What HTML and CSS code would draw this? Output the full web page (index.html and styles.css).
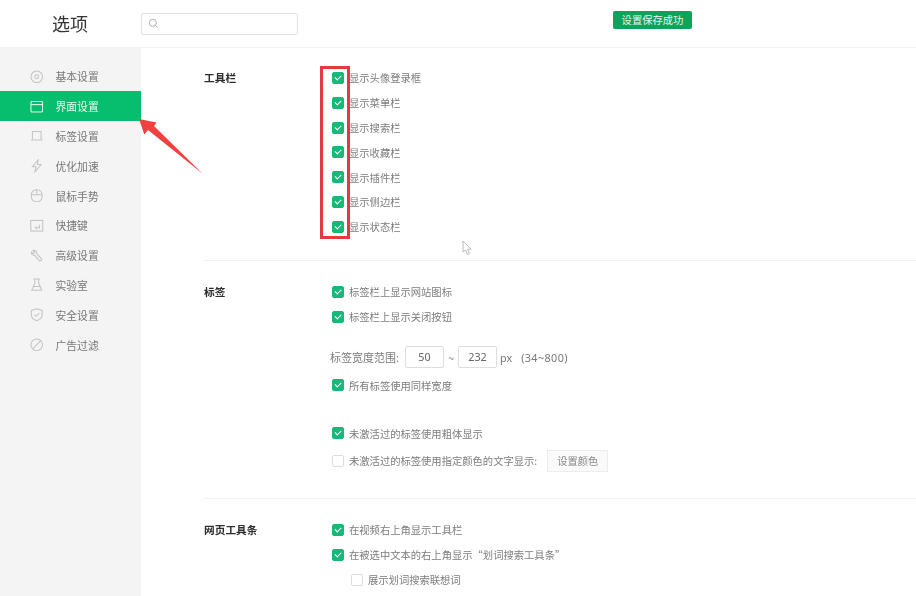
FILE: index.html
```html
<!DOCTYPE html>
<html>

<head>
    <meta charset="UTF-8">
    <title>选项</title>
    <link rel="stylesheet" href="styles.css">
</head>

<body>
    <div class="header">
        <h1 class="title">选项</h1>
        <div class="search">
            <svg class="icon-search" viewBox="0 0 12 12"><circle cx="5.3" cy="5.3" r="3.9"/><path d="M8.2 8.2 10.6 10.6"/></svg>
        </div>
    </div>
    <div class="toast">设置保存成功</div>

    <div class="layout">
        <div class="sidebar">
            <div class="nav-item">
                <svg viewBox="0 0 14 14"><circle cx="7" cy="7" r="6"/><circle cx="7" cy="7" r="2"/></svg>
                基本设置
            </div>
            <div class="nav-item active">
                <svg viewBox="0 0 14 14"><rect x="1" y="1.5" width="12" height="11" rx="1"/><path d="M1 4.8H13"/></svg>
                界面设置
            </div>
            <div class="nav-item">
                <svg viewBox="0 0 14 14"><path d="M2.5 10.5V2.5H11.5V10.5M.8 11.5H13.2"/></svg>
                标签设置
            </div>
            <div class="nav-item">
                <svg viewBox="0 0 14 14"><path d="M8.5.8 2.5 8H6.2L5.2 13.2 11.5 5.8H7.6Z"/></svg>
                优化加速
            </div>
            <div class="nav-item">
                <svg viewBox="0 0 14 14"><rect x="1.5" y=".8" width="11" height="12.4" rx="5"/><path d="M1.5 6H12.5M7 .8V6"/></svg>
                鼠标手势
            </div>
            <div class="nav-item">
                <svg viewBox="0 0 14 14"><rect x=".8" y="1.5" width="12.4" height="11"/><path d="M9.8 6V9H5.5M6.8 7.8 5.5 9 6.8 10.2"/></svg>
                快捷键
            </div>
            <div class="nav-item">
                <svg viewBox="0 0 14 14"><path d="M3.2 1.4 5 3.2 3.4 4.8 1.6 3.2C1.1 5.2 2.6 6.8 4.6 6.4L9.8 12.2C10.6 13 12.8 11.2 12 10.2L7 5C7.6 2.8 5.4.8 3.2 1.4Z"/></svg>
                高级设置
            </div>
            <div class="nav-item">
                <svg viewBox="0 0 14 14"><path d="M3.5 1H10.5M5 1V5.5L1.8 12.8H12.2L9 5.5V1M3.8 8.8H10.2"/></svg>
                实验室
            </div>
            <div class="nav-item">
                <svg viewBox="0 0 14 14"><path d="M7 .8 12.6 2.6V7C12.6 10 10 12.2 7 13.2 4 12.2 1.4 10 1.4 7V2.6Z"/><path d="M4.6 6.8 6.4 8.6 9.6 5.4"/></svg>
                安全设置
            </div>
            <div class="nav-item">
                <svg viewBox="0 0 14 14"><circle cx="7" cy="7" r="6"/><path d="M2.8 11.2 11.2 2.8"/></svg>
                广告过滤
            </div>
        </div>

        <div class="content">
            <div class="section first-section">
                <div class="section-title">工具栏</div>
                <div class="options">
                    <div class="row"><span class="check on"></span>显示头像登录框</div>
                    <div class="row"><span class="check on"></span>显示菜单栏</div>
                    <div class="row"><span class="check on"></span>显示搜索栏</div>
                    <div class="row"><span class="check on"></span>显示收藏栏</div>
                    <div class="row"><span class="check on"></span>显示插件栏</div>
                    <div class="row"><span class="check on"></span>显示侧边栏</div>
                    <div class="row"><span class="check on"></span>显示状态栏</div>
                </div>
            </div>

            <div class="section">
                <div class="section-title">标签</div>
                <div class="options">
                    <div class="row"><span class="check on"></span>标签栏上显示网站图标</div>
                    <div class="row"><span class="check on"></span>标签栏上显示关闭按钮</div>
                    <div class="row range-row">
                        <span class="range-label">标签宽度范围:</span>
                        <span class="num first">50</span>
                        <span class="tilde">~</span>
                        <span class="num">232</span>
                        <span class="unit">px</span>
                        <span class="limit">(34~800)</span>
                    </div>
                    <div class="row same-width"><span class="check on"></span>所有标签使用同样宽度</div>
                    <div class="row after-gap"><span class="check on"></span>未激活过的标签使用粗体显示</div>
                    <div class="row color-row">
                        <span class="check"></span>
                        <span>未激活过的标签使用指定颜色的文字显示:</span>
                        <span class="btn">设置颜色</span>
                    </div>
                </div>
            </div>

            <div class="section">
                <div class="section-title">网页工具条</div>
                <div class="options">
                    <div class="row"><span class="check on"></span>在视频右上角显示工具栏</div>
                    <div class="row"><span class="check on"></span>在被选中文本的右上角显示“划词搜索工具条”</div>
                    <div class="row sub"><span class="check"></span>展示划词搜索联想词</div>
                </div>
            </div>
        </div>
    </div>

    <!-- 标注 -->
    <div class="mark-box"></div>
    <svg class="mark-arrow" viewBox="0 0 70 60"><polygon points="1,1 18.5,4.5 16,8 65,56 10,12 6.3,16.5"/></svg>
    <svg class="mouse" viewBox="0 0 11 16"><path d="M1 1V12L3.6 9.8 5.4 14.4 7.4 13.6 5.6 9.2H9Z"/></svg>
</body>

</html>
```

FILE: styles.css
```css
* {
    box-sizing: border-box;
}

html,
body {
    height: 596px;
    overflow: hidden;
}

body {
    margin: 0;
    background-color: #fff;
    color: #7c7c7c;
    font-family: "Noto Sans CJK SC", "Liberation Sans", sans-serif;
    font-size: 10.3px;
    /* 原图偏糊 */
    filter: blur(0.3px);
}

/* 顶部 */
.header {
    height: 48px;
    display: flex;
    align-items: center;
    border-bottom: 1px solid #f2f2f2;
}

.title {
    width: 141px;
    margin: 0;
    padding: 0 0 2px 52px;
    color: #333;
    font-size: 18px;
    font-weight: 400;
}

.search {
    width: 157px;
    height: 22px;
    display: flex;
    align-items: center;
    padding-left: 6px;
    border: 1px solid #e2e2e2;
    border-radius: 2px;
}

.icon-search {
    width: 11px;
    height: 11px;
    fill: none;
    stroke: #aaa;
    stroke-width: 1;
}

.toast {
    position: absolute;
    left: 613px;
    top: 11px;
    width: 79px;
    height: 18px;
    background-color: #0ca45b;
    border-radius: 2px;
    color: #e6f7ee;
    line-height: 18px;
    text-align: center;
}

/* 主体 */
.layout {
    display: flex;
    height: 548px;
}

.sidebar {
    width: 141px;
    flex-shrink: 0;
    padding-top: 13.6px;
    background-color: #f4f4f4;
}

.nav-item {
    height: 29.8px;
    display: flex;
    align-items: center;
    gap: 12px;
    padding-left: 30px;
    color: #777;
    font-size: 10.8px;
}

.nav-item svg {
    width: 13.5px;
    height: 13.5px;
    fill: none;
    stroke: #c4c4c4;
    stroke-width: 1.1;
}

.nav-item.active {
    background-color: #07bd6e;
    color: #e8fff4;
}

.nav-item.active svg {
    stroke: #dff8ec;
}

.content {
    flex: 1;
    padding-left: 63px;
}

.section {
    display: flex;
    padding: 18.6px 0 21.5px;
    border-bottom: 1px solid #f2f2f2;
}

.first-section {
    padding-top: 17.6px;
    padding-bottom: 20.6px;
}

.section-title {
    width: 128px;
    flex-shrink: 0;
    padding-top: 4.5px;
    color: #2c2c2c;
    font-size: 10.7px;
    font-weight: 700;
}

.row {
    height: 24.8px;
    display: flex;
    align-items: center;
    white-space: nowrap;
}

.check {
    width: 12px;
    height: 12px;
    flex-shrink: 0;
    margin-right: 5px;
    position: relative;
    background-color: #fff;
    border: 1px solid #dcdcdc;
    border-radius: 2px;
}

.check.on {
    background-color: #17b978;
    border-color: #17b978;
}

.check.on::after {
    content: "";
    position: absolute;
    left: 3.2px;
    top: 1px;
    width: 3px;
    height: 5.2px;
    border-right: 1.1px solid #fff;
    border-bottom: 1.1px solid #fff;
    transform: rotate(45deg);
}

.range-row {
    height: 23px;
    margin: 16.7px 0 0 -2px;
}

.range-label {
    width: 75px;
    font-size: 11px;
}

.num {
    width: 39px;
    height: 22px;
    border: 1px solid #dedede;
    border-radius: 2px;
    color: #666;
    font-family: "Noto Sans", sans-serif;
    font-size: 10.8px;
    line-height: 20px;
    text-align: center;
}

.tilde {
    width: 14px;
    text-align: center;
}

.unit {
    margin-left: 3px;
    color: #777;
    font-family: "Noto Sans", sans-serif;
    font-size: 10.8px;
}

.limit {
    margin-left: 9px;
    color: #777;
    font-family: "Noto Sans", sans-serif;
    font-size: 10.8px;
    letter-spacing: 0.4px;
}

.same-width {
    margin-top: 4px;
}

.after-gap {
    margin-top: 23.2px;
}

.color-row {
    height: 31px;
}

.btn {
    width: 61px;
    height: 22px;
    margin-left: 10px;
    background-color: #fafafa;
    border: 1px solid #ececec;
    color: #888;
    line-height: 20px;
    text-align: center;
}

.sub {
    padding-left: 19px;
}

/* 标注 */
.mark-box {
    position: absolute;
    left: 320px;
    top: 66px;
    width: 30px;
    height: 173px;
    border: 3px solid #e23a3f;
}

.mark-arrow {
    position: absolute;
    left: 138px;
    top: 118px;
    width: 70px;
    height: 60px;
    fill: #f0413f;
}

.mouse {
    position: absolute;
    left: 462px;
    top: 240px;
    width: 11px;
    height: 16px;
    fill: #fff;
    stroke: #a8a8a8;
    stroke-width: 0.8;
}
```
